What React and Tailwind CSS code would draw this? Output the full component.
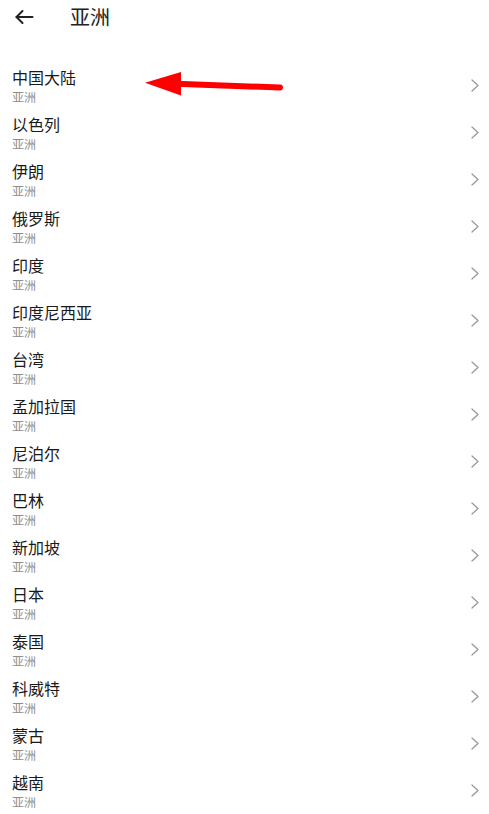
import React from "react";

const items = [
  "中国大陆", "以色列", "伊朗", "俄罗斯", "印度", "印度尼西亚", "台湾", "孟加拉国",
  "尼泊尔", "巴林", "新加坡", "日本", "泰国", "科威特", "蒙古", "越南",
];

export default function App() {
  return (
    <div
      className="relative w-[489px] h-[814px] overflow-hidden bg-white"
      style={{ fontFamily: '"Noto Sans CJK SC", "Noto Sans", sans-serif' }}
    >
      <div className="flex items-center h-[34px]">
        <div className="w-[70px] flex items-center pl-[15px]">
          <svg width="20" height="16" viewBox="0 0 20 16" fill="none" stroke="#222" strokeWidth="2" strokeLinecap="round" strokeLinejoin="round">
            <path d="M1.5 8H17.5" />
            <path d="M7.5 2L1.5 8L7.5 14" />
          </svg>
        </div>
        <div className="text-[20px] leading-[28px] text-[#222]">亚洲</div>
      </div>
      <div className="mt-[28px]">
        {items.map((name) => (
          <div key={name} className="flex items-center h-[47px] pl-[12px] pr-[10px]">
            <div className="flex-1 flex flex-col pt-[1px]">
              <div className="text-[16px] leading-[22px] text-[#1a1a1a]">{name}</div>
              <div className="text-[12px] leading-[18px] text-[#8e8e8e]">亚洲</div>
            </div>
            <svg width="8" height="13" viewBox="0 0 8 13" fill="none" stroke="#9a9a9a" strokeWidth="1.3" strokeLinecap="round" strokeLinejoin="round">
              <path d="M1 1L7 6.5L1 12" />
            </svg>
          </div>
        ))}
      </div>
      <svg className="absolute left-0 top-0 pointer-events-none" width="489" height="814" viewBox="0 0 489 814">
        <line x1="176" y1="83.8" x2="280" y2="87.5" stroke="#ff0000" strokeWidth="6" strokeLinecap="round" />
        <polygon points="145,82.7 181,72 181,95.5" fill="#ff0000" />
      </svg>
    </div>
  );
}
